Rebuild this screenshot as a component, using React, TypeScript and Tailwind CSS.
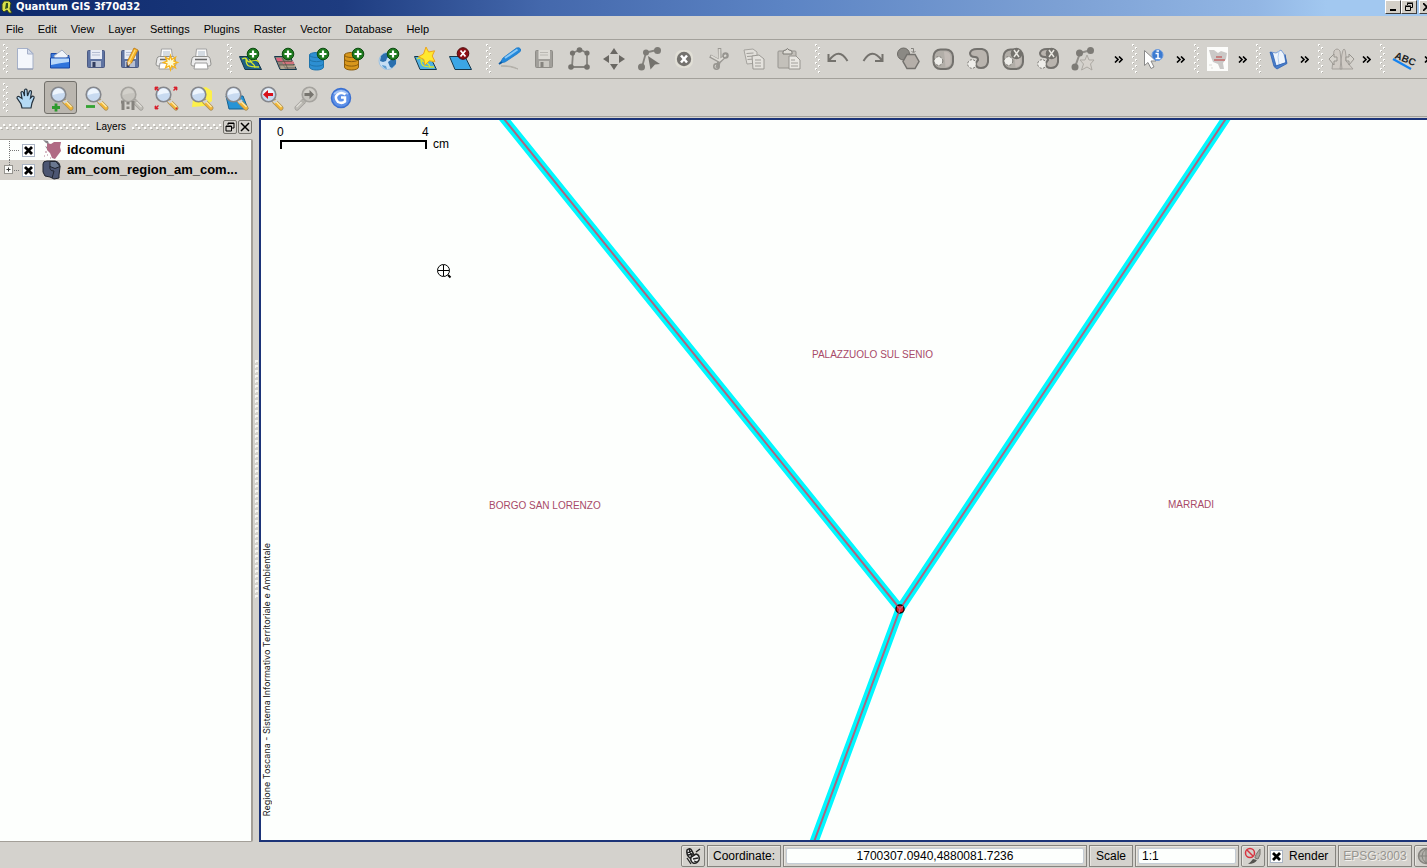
import { useState } from "react";
import type { ReactNode } from "react";

const svgProps = { width: 24, height: 24, viewBox: "0 0 24 24", fill: "none" };

/* ---------- shared icon parts ---------- */

function Plus({ x = 15, y = 7 }: { x?: number; y?: number }) {
  return (
    <g>
      <circle cx={x} cy={y} r="5.8" fill="#1d7a1d" stroke="#0c4a10" />
      <path d={`M${x - 3.5} ${y}h7M${x} ${y - 3.5}v7`} stroke="#fff" strokeWidth="2.2" />
    </g>
  );
}

function Lens({ gray, children }: { gray?: boolean; children?: ReactNode }) {
  return (
    <>
      <path d="M15.500 15.500l6.500 6.500" stroke={gray ? "#a09e99" : "#a8905c"} strokeWidth="5" strokeLinecap="round" />
      <path d="M15.500 15.500l6.500 6.500" stroke={gray ? "#bfbdb7" : "#f2b535"} strokeWidth="3.400" strokeLinecap="round" />
      <path d="M16.500 15l6 6" stroke={gray ? "#dedcd6" : "#fdeaa8"} strokeWidth="1.400" />
      <path d="M14 14.500l2.500 2.500M16.500 14l1.500 1.500" stroke={gray ? "#b2b0aa" : "#cfd2d8"} strokeWidth="2" />
      <circle cx="9.500" cy="8.500" r="7.300" fill={gray ? "#c6c4be" : "#c8daf0"} stroke={gray ? "#a5a39e" : "#85878c"} strokeWidth="1.600" />
      <path d="M4 9a5.500 5.500 0 0 1 11-2q-5 0-11 2z" fill={gray ? "#d2d0ca" : "#eef5fd"} />
      {children}
    </>
  );
}

function Floppy({ gray }: { gray?: boolean }) {
  return (
    <>
      <rect x="3.500" y="3.500" width="17" height="17" rx="1" fill={gray ? "#a19f9a" : "#5f74a2"} stroke={gray ? "#8e8c87" : "#4c5a82"} />
      <rect x="6.500" y="3" width="11.500" height="9" fill={gray ? "#dddbd5" : "#e8ecf5"} />
      <path d="M8 5.500h8M8 8h8" stroke={gray ? "#bab8b2" : "#b4bdd2"} />
      <rect x="7" y="14" width="10" height="6" fill={gray ? "#c9c7c1" : "#b6bfd3"} />
      <rect x="8.500" y="15" width="3" height="5" fill={gray ? "#85837e" : "#313d60"} />
    </>
  );
}

function Printer() {
  return (
    <>
      <path d="M7.500 2h10l1 9h-12z" fill="#fafafa" stroke="#a2a2a2" />
      <path d="M9 4h7v5H9z" fill="#d4dbe2" />
      <path d="M3 11.500q.5-2 2.500-2h13q2 0 2.500 2l1 5.500q0 2-2 2H4q-2 0-2-2z" fill="#ececec" stroke="#92928f" />
      <path d="M6 12.500h12" stroke="#666" strokeWidth="1.500" />
      <path d="M6 16h12l1 6H5z" fill="#fff" stroke="#9c9c9c" />
    </>
  );
}

function Tile({ fill }: { fill: string }) {
  return <path d="M1.500 9.500h15.500l6.500 13H7z" fill={fill} stroke="#16384c" />;
}

function Rivers() {
  return <path d="M4 12q4-2 5 1t5 1 7 1M8 12q0 6 3 7t10 1M12 10q-1 4 2 6t3 5" stroke="#d8e62a" strokeWidth="1.300" />;
}

function Cylinder({ fill, line }: { fill: string; line: string }) {
  return (
    <>
      <path d="M1.500 8v12c0 4 14 4 14 0V8z" fill={fill} stroke={line} />
      <ellipse cx="8.500" cy="8" rx="7" ry="2.500" fill={fill} stroke={line} />
      <path d="M1.500 12c0 3.500 14 3.500 14 0M1.500 16.500c0 3.500 14 3.500 14 0" stroke={line} />
    </>
  );
}

function Ring() {
  return (
    <>
      <rect x="2.500" y="2.500" width="19.500" height="19.500" rx="7" fill="#b2aea8" stroke="#73716d" strokeWidth="2" />
      <path d="M13 4.500q6 0 6.500 5v6q0 4-5 4.500z" fill="#c2bbb6" />
      <circle cx="7.500" cy="14" r="4.300" fill="#eeede9" stroke="#777570" strokeDasharray="2 1.500" />
    </>
  );
}

function Part() {
  return (
    <>
      <path d="M4 6q1-4 7-4h5q6 1 6 8v5q-1 6-7 6-5 0-5-4 0-2 2-4 0-3-3-3-5 0-5-4z" fill="#b9b4ae" stroke="#73716d" strokeWidth="2" />
      <circle cx="6" cy="17" r="4.300" fill="#eeede9" stroke="#777570" strokeDasharray="2 1.500" />
    </>
  );
}

function GrayCross() {
  return (
    <>
      <circle cx="15.500" cy="6.500" r="5.800" fill="#73716c" />
      <path d="M13 3l5 7M18 3l-5 7" stroke="#e8e6e0" strokeWidth="1.500" />
    </>
  );
}

/* ---------- icons ---------- */

const icons: Record<string, ReactNode> = {
  "New Project": (
    <>
      <path d="M3.500 1.500H14l5 5V22H3.500z" fill="#f4f7fc" stroke="#a5b0c8" />
      <path d="M13.500 1.500V7H19z" fill="#d4dcec" stroke="#a5b0c8" />
      <path d="M3.500 22H19" stroke="#8a94ac" />
    </>
  ),
  "Open Project": (
    <>
      <path d="M2 6.500h6l1.500 2H20V20H2z" fill="#3a78d8" stroke="#1c4aa8" />
      <path d="M5 9l8-6 6 6-3 4H6z" fill="#f0f4fa" stroke="#a3aec2" />
      <path d="M1.500 11h19v10h-19z" fill="#2f74dc" stroke="#1746a4" />
      <path d="M2 11.500h18v3.500Q11 16 2 18z" fill="#b8d8fa" />
    </>
  ),
  "Save Project": <Floppy />,
  "Save Project As": (
    <>
      <g transform="translate(-1 0)"><Floppy /></g>
      <path d="M15 1l4 2-6.500 13-3.500 2.500-.5-4.500z" fill="#f8b82c" stroke="#b77412" strokeWidth=".8" />
      <path d="M16 3l-6 12" stroke="#ffe48a" />
      <path d="M8.500 14l3.500 2-3 2.500z" fill="#f5dfba" />
    </>
  ),
  "New Print Composer": (
    <>
      <Printer />
      <path d="M16.500 8.500l1.200 4 3.800-2.200-1.600 3.900 3.600 1.300-3.600 1.400 1.600 4-3.800-2-1.200 4-1.300-4-3.700 2 1.500-4-3.600-1.400 3.600-1.300-1.500-3.900 3.700 2.200z" fill="#fffbd0" stroke="#f5b41c" strokeWidth="1.300" />
    </>
  ),
  "Composer Manager": <Printer />,
  "Add Vector Layer": (<><Tile fill="#1f6286" /><Rivers /><Plus /></>),
  "Add Raster Layer": (
    <>
      <Tile fill="#8c8378" />
      <path d="M3 11h5l2 4H5z" fill="#e0607e" />
      <path d="M9 14h11l1.500 3H10z" fill="#d1727c" />
      <path d="M11 18h11l1 2H12zM7 18h3l2 4H8z" fill="#b0a48c" />
      <path d="M9 10l6 12M4 14.500h15M6 18h15" stroke="#554c40" strokeWidth=".7" />
      <Plus />
    </>
  ),
  "Add PostGIS Layer": (<><Cylinder fill="#2d8fd2" line="#1f74ac" /><Plus /></>),
  "Add SpatiaLite Layer": (<><Cylinder fill="#d8971c" line="#8a5c0c" /><Plus /></>),
  "Add WMS Layer": (
    <>
      <circle cx="9.500" cy="14" r="8.500" fill="#c5def3" stroke="#9cc2e2" />
      <path d="M3 9q4-5 8-2 1 3-2 4l-1 3-3 1-3-1zM10 15l4-3 4 1v4l-4 4-2-1z" fill="#2a6fae" />
      <path d="M4 18l4 1 1 3q-4-1-5-4z" fill="#5c9ed2" />
      <Plus />
    </>
  ),
  "New Vector Layer": (
    <>
      <Tile fill="#4fb1e2" />
      <Rivers />
      <path d="M13 0l2.600 5 6-1.200-2.400 5.200 2.800 5.500-5.800-.7-4.200 4.200-1.200-5.600-5.300-2.600 5-2.800z" fill="#ffe92e" stroke="#eda41c" />
    </>
  ),
  "Remove Layer": (
    <>
      <Tile fill="#3ba6e6" />
      <circle cx="15" cy="6.500" r="5.800" fill="#8c0f14" stroke="#4c0608" />
      <path d="M12.500 3.500l5 6M17.500 3.500l-5 6" stroke="#fff" strokeWidth="1.800" />
    </>
  ),
  "Toggle Editing": (
    <>
      <path d="M4 19q10-1 17 3-7-3-17-3z" fill="#b3b0a9" stroke="#b3b0a9" />
      <path d="M3 16l3-5L19.500 1q3-1 4 1t-2 4L8 15z" fill="#2389dc" stroke="#1a78c8" strokeWidth=".8" />
      <path d="M8 11L20.500 2.500" stroke="#8ac8f6" strokeWidth="2" />
      <path d="M2 17l3-2" stroke="#0d5ba4" strokeWidth="2" />
    </>
  ),
  "Save Edits": <Floppy gray />,
  "Capture Polygon": (
    <>
      <path d="M5 20l1-14 7-3.500L20 6v14z" stroke="#85837e" strokeWidth="1.800" />
      <g fill="#74726d">
        <circle cx="12.500" cy="3" r="2.800" /><circle cx="5.500" cy="6" r="2.600" /><circle cx="20" cy="6" r="2.600" />
        <circle cx="4" cy="20" r="2.800" /><circle cx="20" cy="20" r="2.800" />
      </g>
    </>
  ),
  "Move Feature": (
    <path d="M12 1l4 6H8zM12 23l4-6H8zM1 12l6-4v8zM23 12l-6-4v8z" fill="#6a6863" />
  ),
  "Node Tool": (
    <>
      <path d="M5 20L9 5.500 20 3" stroke="#85837e" strokeWidth="1.800" />
      <g fill="#7d7b76"><circle cx="4.500" cy="20" r="3.500" /><circle cx="9" cy="5.500" r="3" /><circle cx="20.500" cy="3.500" r="3.500" /></g>
      <path d="M11 9l12 8-5 .5-4.500 5z" fill="#74726d" />
    </>
  ),
  "Delete Selected": (
    <>
      <rect x="3" y="3" width="18" height="18" rx="7" fill="#e1dfd6" />
      <circle cx="12" cy="12" r="7.200" fill="#74726e" />
      <path d="M9 8.500l6 7M15 8.500l-6 7" stroke="#fff" strokeWidth="2.500" />
    </>
  ),
  "Cut Features": (
    <>
      <path d="M12.500 1l.5 13M3 9l11 6M20 7l-8 8-2 6" stroke="#9a9893" strokeWidth="3.500" />
      <path d="M12.500 2v12M4 9l9 5M19 8l-7 6" stroke="#dddbd5" strokeWidth="1.800" />
      <circle cx="9.500" cy="19.500" r="2.700" stroke="#96948f" strokeWidth="1.500" />
      <circle cx="18.500" cy="8.500" r="2.500" stroke="#96948f" strokeWidth="1.500" />
    </>
  ),
  "Copy Features": (
    <>
      <path d="M2 3l9-1 4 3v11l-10 1z" fill="#e1dfda" stroke="#a5a39e" />
      <path d="M4.500 6.500l7-.5M5 9.500l7-.5M5.500 12.500l7-.5" stroke="#a09e99" />
      <path d="M10 9l7-1 5 4v10H11z" fill="#e4e2dd" stroke="#9a9893" />
      <path d="M13 13h6M13 16h6M13 19h6" stroke="#a09e99" />
    </>
  ),
  "Paste Features": (
    <>
      <rect x="1" y="4" width="18" height="17" rx="1" fill="#c3c0ba" stroke="#96948f" />
      <path d="M6 5q0-2 3-2 1-3 3 0 3 0 3 2v2H6z" fill="#dedcd6" stroke="#7c7a75" />
      <path d="M12 9h7l4 4v9H12z" fill="#e9e7e2" stroke="#96948f" />
      <path d="M14 13h4M14 16h7M14 19h7" stroke="#a09e99" />
    </>
  ),
  Undo: <path d="M21.500 14Q13 0 3.500 13M2.500 7v7H10" stroke="#74726d" strokeWidth="2" />,
  Redo: <path d="M2.500 14Q11 0 20.500 13M21.500 7v7H14" stroke="#74726d" strokeWidth="2" />,
  "Simplify Feature": (
    <>
      <circle cx="7.500" cy="7" r="6" fill="#8b8984" stroke="#6b6964" />
      <path d="M11 7.500h8l4 7-4 7h-8l-4-7z" fill="#b5afa9" stroke="#73716d" strokeWidth="1.500" />
      <path d="M15 1.500h2.500V5M15.500 4l2 2 2-2" stroke="#85837e" />
    </>
  ),
  "Add Ring": <Ring />,
  "Add Part": <Part />,
  "Delete Ring": (<><Ring /><GrayCross /></>),
  "Delete Part": (<><Part /><GrayCross /></>),
  "Reshape Features": (
    <>
      <path d="M4 20L9 6l11-3" stroke="#908e89" strokeWidth="2" />
      <g fill="#7d7b76"><circle cx="4" cy="20" r="3.500" /><circle cx="8.500" cy="6" r="3.500" /><circle cx="19.500" cy="3.500" r="3.500" /></g>
      <path d="M16 8l2 5h5l-3.500 4 1.500 6-5-3-5.500 3 2-6L9 13h5z" fill="#d6d2cc" stroke="#aca9a3" />
    </>
  ),
  "Identify Features": (
    <>
      <path d="M1.500 3.500v15l3.500-3 3 6 3-1.500-3-6h5z" fill="#fff" stroke="#888" />
      <circle cx="14.500" cy="8" r="5.500" fill="#3b7ad0" stroke="#6d9ce0" />
      <path d="M12.500 6.500H15v4.500M12.500 11.500h5M13.500 4H16" stroke="#fff" strokeWidth="1.500" />
    </>
  ),
  "Regione Plugin": (
    <>
      <path d="M2 0h21v24H2z" fill="#fcfcfa" />
      <path d="M4 3l5 0 4 3 3-2 6 2-1 6-3 4 1 6-4 0-2-5-5-2-2-5z" fill="#cbc9c7" />
      <path d="M11 10h6M9 13h11" stroke="#c46a6a" strokeWidth="1.500" />
      <path d="M4 18h3M6 21h2" stroke="#dcdad6" />
    </>
  ),
  Help: (
    <>
      <path d="M4 5l4 14 11-3-2-9-3-4-5 3z" fill="#edf4fc" stroke="#7a9fd8" />
      <path d="M3 5l2.500 1L9 18.500l-2 1zM9 19l10-3.500-1-8 2 9L10 22l-2.500-2z" fill="#4a7fcc" stroke="#2f62b2" strokeWidth=".8" />
      <path d="M12 4q-2 6 0 13" stroke="#b4cdee" />
    </>
  ),
  "Histogram Stretch": (
    <>
      <path d="M3 22l2-18q3-4 6 0l2 18zM11 22q2-20 4-20t2 12l7 8z" fill="#d0cbc5" stroke="#a5a19c" />
      <path d="M0 12l5-5v3h3v4H5v4zM25 12l-5-5v3h-3v4h3v4z" fill="#d6d3cd" stroke="#98958f" />
    </>
  ),
  Labeling: (
    <>
      <path d="M2 12l18 10" stroke="#1583f0" strokeWidth="2.200" />
      <text x="3" y="11" transform="rotate(22 3 11)" fontSize="10" fontWeight="700" fontFamily="Liberation Sans, sans-serif" fill="#222">ABC</text>
    </>
  ),
  "Pan Map": (
    <path d="M8 22l-1-4-4-6q0-2 2-1.500l3 2-1-6q1-2 2.500 0l1 3.500V4q1.500-2 2.500 0l.5 6 2-5q2-1 2 1l-1 6 2-2q2 0 1.500 2L18 17l-1 5z" fill="#b4daf5" stroke="#22303c" strokeWidth="1.200" />
  ),
  "Zoom In": (<><Lens /><path d="M7 17.500v8M3 21.500h8" stroke="#2d9a2d" strokeWidth="2.800" /></>),
  "Zoom Out": (<><Lens /><path d="M2 20.500h9" stroke="#33a333" strokeWidth="2.800" /></>),
  "Zoom Actual": (<><Lens gray /><path d="M2 16h2v8M14 15v9M9 16v2.500M9 20.500v2.500" stroke="#85837e" strokeWidth="3" /></>),
  "Zoom Full": (
    <>
      <Lens />
      <path d="M1.500 1.500l3 3M22.500 1.500l-3 3M1.500 22.500l3-3" stroke="#d8202c" strokeWidth="1.300" />
      <path d="M1 1h3v1H2v2H1zM23 1h-3v1h2v2h1zM1 23h3v-1H2v-2H1z" fill="#d8202c" stroke="#d8202c" strokeWidth=".8" />
      <circle cx="22.500" cy="22.500" r="1" fill="#d8202c" />
    </>
  ),
  "Zoom to Selection": (<><path d="M5 4l12-3 6 4v10l-7 5-13 1 1-8z" fill="#fdf04a" /><Lens /></>),
  "Zoom to Layer": (<><path d="M2 10h17l5 13H5z" fill="#2794d6" stroke="#17618f" /><Lens /></>),
  "Zoom Last": (<><Lens /><path d="M4 8.500l5-4.500v3h5v3H9v3z" fill="#d8101c" /></>),
  "Zoom Next": (
    <>
      <g transform="translate(25 0) scale(-1 1)"><Lens gray /></g>
      <path d="M20 8.500L15.500 4v3h-5v3h5v3z" fill="#77756f" />
    </>
  ),
  Refresh: (
    <>
      <circle cx="12" cy="12" r="9.500" fill="#5d90e8" stroke="#3a6fd0" strokeWidth="1.500" />
      <path d="M5 8q7-6 14 0" stroke="#a4c4f6" strokeWidth="2" />
      <path d="M16.500 8.500Q12 5.500 8.500 8.500T9 16q4 2 7-.5v-4h-4" stroke="#fff" strokeWidth="2.500" />
    </>
  ),
};

/* ---------- toolbars ---------- */

const groups = [
  { names: ["New Project", "Open Project", "Save Project", "Save Project As", "New Print Composer", "Composer Manager"] },
  { names: ["Add Vector Layer", "Add Raster Layer", "Add PostGIS Layer", "Add SpatiaLite Layer", "Add WMS Layer", "New Vector Layer", "Remove Layer"] },
  { names: ["Toggle Editing", "Save Edits", "Capture Polygon", "Move Feature", "Node Tool", "Delete Selected", "Cut Features", "Copy Features", "Paste Features"] },
  { names: ["Undo", "Redo", "Simplify Feature", "Add Ring", "Add Part", "Delete Ring", "Delete Part", "Reshape Features"], more: "ml-2.5" },
  { names: ["Identify Features"], more: "ml-0" },
  { names: ["Regione Plugin"], more: "ml-0" },
  { names: ["Help"], more: "ml-0" },
  { names: ["Histogram Stretch"], more: "ml-0" },
  { names: ["Labeling"], more: "ml-0" },
];

const navigation = ["Pan Map", "Zoom In", "Zoom Out", "Zoom Actual", "Zoom Full", "Zoom to Selection", "Zoom to Layer", "Zoom Last", "Zoom Next", "Refresh"];

function Grip() {
  return (
    <svg width="5" height="30" className="shrink-0">
      {Array.from({ length: 10 }, (_, i) => (
        <g key={i}>
          <rect x={i % 2 ? 3 : 0} y={i * 3} width="2" height="2" fill="#fdfdfb" />
          <rect x={i % 2 ? 4 : 1} y={i * 3 + 1} width="1" height="1" fill="#b0aea8" />
        </g>
      ))}
    </svg>
  );
}

function ToolButton({ name, active, onClick }: { name: string; active?: boolean; onClick?: () => void }) {
  return (
    <button
      type="button"
      aria-label={name}
      onClick={onClick}
      className={`mx-px flex size-[33px] shrink-0 items-center justify-center rounded-[3px] border ${
        active ? "border-[#72706b] bg-[#bab6af]" : "border-transparent"
      }`}
    >
      <svg {...svgProps} className="shrink-0 overflow-visible">{icons[name]}</svg>
    </button>
  );
}

function More({ className }: { className: string }) {
  return (
    <button type="button" aria-label="More tools" className={`flex w-4 shrink-0 items-center justify-center ${className}`}>
      <svg width="9" height="7" viewBox="0 0 9 7" fill="none">
        <path d="M1 .5l3 3-3 3M5 .5l3 3-3 3" stroke="#000" strokeWidth="1.600" />
      </svg>
    </button>
  );
}

/* ---------- layers dock ---------- */

function DotRow() {
  return (
    <svg height="6" className="w-0 min-w-0 flex-1">
      <defs>
        <pattern id="dock-dots" width="6" height="6" patternUnits="userSpaceOnUse">
          <path d="M0 3h2v2H0zM3 0h2v2H3z" fill="#fdfdfb" />
          <path d="M1 5h2v1H1zM4 2h2v1H4z" fill="#b4b2ac" />
        </pattern>
      </defs>
      <rect width="100%" height="6" fill="url(#dock-dots)" />
    </svg>
  );
}

function Check({ id, defaultChecked }: { id: string; defaultChecked?: boolean }) {
  return (
    <span className="relative flex size-[13px] shrink-0">
      <input id={id} type="checkbox" defaultChecked={defaultChecked} className="peer size-[13px] appearance-none border border-[#a9b4c4] bg-white" />
      <svg viewBox="0 0 13 13" className="pointer-events-none absolute inset-0 hidden size-[13px] peer-checked:block">
        <path d="M3 3l7 7M10 3l-7 7" stroke="#000" strokeWidth="2.800" />
      </svg>
    </span>
  );
}

function LayersPanel() {
  return (
    <aside className="flex w-[253px] shrink-0 flex-col">
      <div className="flex h-[21px] shrink-0 items-center pb-1">
        <DotRow />
        <h2 className="px-1.5 text-[10px]">Layers</h2>
        <DotRow />
        <div className="flex gap-px px-px">
          <button type="button" aria-label="Float panel" className="flex size-3.5 items-center justify-center rounded-[2px] border border-[#77756f]">
            <svg width="10" height="10" fill="none" stroke="#000">
              <path d="M3 3V1h6v5H7M3 1.500h6M1 4h5.500v5H1zM1 4.500h6" />
            </svg>
          </button>
          <button type="button" aria-label="Close panel" className="flex size-3.5 items-center justify-center rounded-[2px] border border-[#77756f]">
            <svg width="10" height="10" stroke="#000" strokeWidth="1.500">
              <path d="M1 1l8 8M9 1L1 9" />
            </svg>
          </button>
        </div>
      </div>
      <ul className="min-h-0 flex-1 overflow-hidden rounded-r-[2px] border-y border-r-2 border-[#a39f98] bg-[#fdfffd] text-[13px] font-bold">
        <li className="flex h-5 items-center">
          <svg width="22" height="20" className="shrink-0" fill="none" stroke="#777" strokeDasharray="1 1">
            <path d="M9.500 1v19M10 10.500h9" />
          </svg>
          <Check id="layer-idcomuni" defaultChecked />
          <svg width="20" height="20" className="ml-[7px] shrink-0">
            <path d="M5 3l4 1 3-2 7 0-1 5 1 4-3 4-3 4-3-1-2-5-3-3z" fill="#b06a84" />
            <path d="M1 0l5 1 1 3-3-1zM3 6l2 1v2z" fill="#85858a" />
            <path d="M3 12h2M5 15h1M8 18h1M2 16h1" stroke="#b07a90" />
          </svg>
          <label htmlFor="layer-idcomuni" className="ml-[5px]">idcomuni</label>
        </li>
        <li className="flex h-5 items-center bg-[#d4d0ca]">
          <button type="button" aria-label="Expand" className="h-5 w-[22px] shrink-0">
            <svg width="22" height="20" fill="none">
              <path d="M9.500 0v5M14 10.500h5" stroke="#777" strokeDasharray="1 1" />
              <rect x="4.500" y="5.500" width="8" height="8" fill="#fafaf8" stroke="#96948f" />
              <path d="M6.500 9.500h4M8.500 7.500v4" stroke="#333" />
            </svg>
          </button>
          <Check id="layer-region" defaultChecked />
          <svg width="20" height="20" className="ml-[7px] shrink-0" stroke="#20242e">
            <path d="M1 4q0-3 4-3l8 0q5 1 5 6l-1 8 0 3-5 1-4-2-5-1-2-4z" fill="#4c5672" />
            <path d="M8 1.500h6l4 5-5 2-5-2z" fill="#6a7890" />
            <path d="M8 6q-1 5 4 5-1 4-2 7" fill="none" />
          </svg>
          <label htmlFor="layer-region" className="ml-[5px] whitespace-nowrap">am_com_region_am_com...</label>
        </li>
      </ul>
    </aside>
  );
}

/* ---------- map ---------- */

function MapCanvas() {
  return (
    <main className="relative min-w-0 flex-1 overflow-hidden border-y-2 border-l-2 border-[#1c3478] bg-[#fdfffd]">
      <svg className="absolute inset-0 size-full" fill="none" fontFamily="Liberation Sans, sans-serif">
        <g stroke="#00f8ff" strokeWidth="9">
          <path d="M239-6L639 489L968-6M639 489L550 730" />
        </g>
        <g stroke="#b06480" strokeWidth="2">
          <path d="M239-6L639 489L968-6M639 489L550 730" />
        </g>
        <circle cx="639" cy="489" r="4" fill="#e01c28" stroke="#200" strokeWidth="1.500" />
        <path d="M636 486l3 3 3-3M639 489l-1 4" stroke="#c0607c" strokeWidth="1.500" />

        {/* Scale bar */}
        <path d="M20 29v-8h145v8" stroke="#000" strokeWidth="2" />
        <g fill="#000" fontSize="12">
          <text x="16" y="16">0</text>
          <text x="161" y="16">4</text>
          <text x="172" y="28">cm</text>
        </g>

        {/* Zoom cursor */}
        <g stroke="#000">
          <circle cx="182.500" cy="150.500" r="6" />
          <path d="M177 150.500h11M182.500 145v11" />
          <path d="M187 155l2.500 2.500" strokeWidth="2" />
        </g>

        <g fill="#a84a68" fontSize="10">
          <text x="551" y="238">PALAZZUOLO SUL SENIO</text>
          <text x="228" y="389">BORGO SAN LORENZO</text>
          <text x="907" y="388">MARRADI</text>
        </g>
      </svg>
      <p className="absolute bottom-6 left-0 rotate-180 font-['Inter',sans-serif] text-[9px] leading-3 whitespace-nowrap text-[#222] [writing-mode:vertical-rl]">
        Regione Toscana - Sistema Informativo Territoriale e Ambientale
      </p>
    </main>
  );
}

/* ---------- status bar ---------- */

const cell = "flex h-[22px] shrink-0 items-center border border-[#85837e] shadow-[inset_1px_1px_0_#e8e6e1]";

function StatusBar() {
  return (
    <footer className="flex h-[26px] shrink-0 items-center justify-end gap-0.5 overflow-hidden pt-0.5 text-[12px]">
      <button type="button" aria-label="Toggle extents" className={`${cell} w-6 justify-center rounded-[2px]`}>
        <svg width="18" height="18" fill="none" stroke="#222">
          <path d="M3 3q3-3 5 1l2 4-4 3q-4-3-3-8zM7 10l5-3q4 1 3 6-2 4-6 3-3-2-2-6z" fill="#eee" strokeWidth="1.500" />
          <path d="M5 2l3 8M3 6l5-2M12 5l4-3M9 12l5-1M3 11l4 6M10 14l3 1M4 8l5-1" strokeWidth="1.300" />
        </svg>
      </button>
      <label htmlFor="coordinate" className={`${cell} w-[74px] justify-center`}>Coordinate:</label>
      <span className={`${cell} w-[304px] p-0.5`}>
        <input id="coordinate" defaultValue="1700307.0940,4880081.7236" className="h-full w-full rounded-[2px] border border-[#c4ccd4] bg-[#fdfffd] text-center" />
      </span>
      <label htmlFor="scale" className={`${cell} w-11 justify-center`}>Scale</label>
      <span className={`${cell} w-[104px] p-0.5`}>
        <input id="scale" defaultValue="1:1" className="h-full w-full rounded-[2px] border border-[#c4ccd4] bg-[#fdfffd] px-[3px]" />
      </span>
      <button type="button" aria-label="Stop rendering" className={`${cell} w-6 justify-center rounded-[2px]`}>
        <svg width="18" height="18" fill="none">
          <path d="M16 2q-5 6-5 9l3 1q3-4 2-10z" fill="#a8a6a0" stroke="#77756f" />
          <path d="M4 17q2-1 5-5l4 1q-2 4-9 4z" fill="#55534f" />
          <circle cx="6" cy="6" r="4.500" stroke="#d83440" strokeWidth="1.500" />
          <path d="M3 3l6 6" stroke="#d83440" strokeWidth="1.500" />
        </svg>
      </button>
      <span className={`${cell} w-[69px] gap-1.5 pl-0.5`}>
        <Check id="render" defaultChecked />
        <label htmlFor="render">Render</label>
      </span>
      <span className={`${cell} w-[74px] justify-center text-[#96948f] [text-shadow:1px_1px_0_#f4f2ee]`}>EPSG:3003</span>
      <button type="button" aria-label="CRS status" className={`${cell} -mr-[11px] w-6 justify-center rounded-[2px]`}>
        <svg width="18" height="18" fill="none" stroke="#85837e">
          <circle cx="9" cy="9" r="7.500" fill="#b2b0aa" strokeWidth="1.500" />
          <path d="M2 9h14M9 2v14M9 2q-8 7 0 14M9 2q8 7 0 14" />
        </svg>
      </button>
    </footer>
  );
}

const windowButton = "flex h-[14px] w-4 shrink-0 items-center justify-center border border-t-white border-l-white border-r-[#404040] border-b-[#404040] bg-[#d4d0c8]";

const menus = ["File", "Edit", "View", "Layer", "Settings", "Plugins", "Raster", "Vector", "Database", "Help"];

export default function App() {
  const [tool, setTool] = useState("Zoom In");

  return (
    <div className="flex h-screen flex-col overflow-hidden bg-[#d4d2cd] font-['Liberation_Sans',sans-serif] text-black">
      {/* Title bar */}
      <header className="flex h-4 shrink-0 items-start overflow-hidden bg-[linear-gradient(90deg,#0e2a6c_0%,#1e3c80_24%,#4468ac_38%,#5c84c4_55%,#7ca0d4_74%,#92b6e4_88%,#a2c8f0_93%)]">
        <svg width="14" height="14" className="shrink-0">
          <path d="M4 1l5 0 2 2-1 6 2 4H9l-2-3-3 2-2-2 0-6z" fill="#d8e04a" stroke="#30401c" />
          <path d="M6 3l-1 6 3-1 0-5z" fill="#30501c" />
        </svg>
        <h1 className="ml-0.5 flex-1 font-['DejaVu_Sans',sans-serif] text-[10px] leading-[14px] font-bold whitespace-nowrap text-white">Quantum GIS 3f70d32</h1>
        <button type="button" aria-label="Minimize" className={windowButton}>
          <svg width="8" height="8"><path d="M1 6h6v2H1z" /></svg>
        </button>
        <button type="button" aria-label="Restore" className={windowButton}>
          <svg width="10" height="10" fill="none" stroke="#000">
            <path d="M3.500 3V1.500h5v4H7M3 1h6M1.500 4.500h5v4h-5zM1 4h6" />
          </svg>
        </button>
        <button type="button" aria-label="Close" className={`${windowButton} -mr-2 ml-0.5`}>
          <svg width="8" height="8" stroke="#000" strokeWidth="1.600"><path d="M0 0l8 8M8 0L0 8" /></svg>
        </button>
      </header>

      {/* Menu bar */}
      <nav className="flex h-6 shrink-0 items-center gap-3.5 border-b border-[#a3a19b] px-1.5 pt-1 text-[11px]">
        {menus.map((menu) => (
          <button key={menu} type="button">{menu}</button>
        ))}
      </nav>

      {/* Toolbars */}
      <div className="flex h-[39px] shrink-0 items-center gap-[9px] overflow-hidden border-b border-[#a3a19b] pl-[3px]">
        {groups.map((group) => (
          <div key={group.names[0]} className={`flex shrink-0 items-center ${group.more ? "-mr-[3px]" : ""}`}>
            <Grip />
            {group.names.map((name) => (
              <ToolButton key={name} name={name} />
            ))}
            {group.more && <More className={group.more} />}
          </div>
        ))}
      </div>
      <div className="flex h-[38px] shrink-0 items-center overflow-hidden border-b border-[#a3a19b] pl-[3px]">
        <Grip />
        {navigation.map((name) => (
          <ToolButton key={name} name={name} active={tool === name} onClick={() => setTool(name)} />
        ))}
      </div>

      <div className="flex min-h-0 flex-1 pt-px">
        <LayersPanel />
        <div className="flex w-1.5 shrink-0 items-center justify-center">
          <svg width="3" height="240">
            {Array.from({ length: 48 }, (_, i) => (
              <path key={i} d={`M0 ${i * 5}h3v2H1v1H0z`} fill="#f6f5f2" />
            ))}
          </svg>
        </div>
        <MapCanvas />
      </div>

      <StatusBar />
    </div>
  );
}
